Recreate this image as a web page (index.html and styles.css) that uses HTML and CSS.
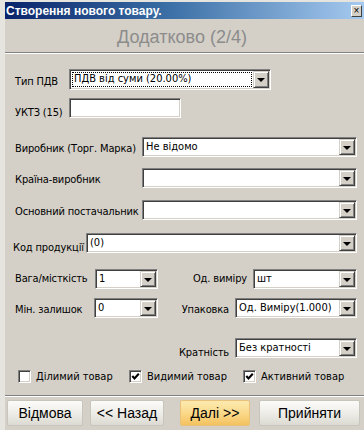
FILE: index.html
```html
<!DOCTYPE html>
<html>
<head>
<meta charset="utf-8">
<link rel="stylesheet" href="styles.css">
</head>
<body>
<div class="window">
  <div class="titlebar">
    <span class="title">Створення нового товару.</span>
    <span class="close">×</span>
  </div>
  <div class="header">Додатково (2/4)</div>
  <div class="form">
    <div class="row r1">
      <span class="lbl w54">Тип ПДВ</span>
      <div class="combo w202 tall"><span class="val focus">ПДВ від суми (20.00%)</span><span class="drop"><i class="tri"></i></span></div>
    </div>
    <div class="row r2">
      <span class="lbl w54 low">УКТЗ (15)</span>
      <div class="field w112"></div>
    </div>
    <div class="row r3">
      <span class="lbl w127">Виробник (Торг. Марка)</span>
      <div class="combo grow"><span class="val">Не відомо</span><span class="drop"><i class="tri"></i></span></div>
    </div>
    <div class="row r4">
      <span class="lbl w127">Країна-виробник</span>
      <div class="combo grow"><span class="val"></span><span class="drop"><i class="tri"></i></span></div>
    </div>
    <div class="row r5">
      <span class="lbl w127">Основний постачальник</span>
      <div class="combo grow"><span class="val"></span><span class="drop"><i class="tri"></i></span></div>
    </div>
    <div class="row r6">
      <span class="lbl w73 low shift">Код продукції</span>
      <div class="combo grow"><span class="val">(0)</span><span class="drop"><i class="tri"></i></span></div>
    </div>
    <div class="row r7">
      <span class="lbl w80 flat">Вага/місткість</span>
      <div class="combo w63"><span class="val">1</span><span class="drop"><i class="tri"></i></span></div>
      <span class="lbl rlbl w95 flat">Од. виміру</span>
      <div class="combo grow"><span class="val">шт</span><span class="drop"><i class="tri"></i></span></div>
    </div>
    <div class="row r8">
      <span class="lbl w79">Мін. залишок</span>
      <div class="combo w64"><span class="val">0</span><span class="drop"><i class="tri"></i></span></div>
      <span class="lbl rlbl w77">Упаковка</span>
      <div class="combo grow"><span class="val">Од. Виміру(1.000)</span><span class="drop"><i class="tri"></i></span></div>
    </div>
    <div class="row r9">
      <span class="lbl rlbl push low">Кратність</span>
      <div class="combo w122"><span class="val">Без кратності</span><span class="drop"><i class="tri"></i></span></div>
    </div>
    <div class="row checks">
      <label class="chk c1"><span class="box"></span>Ділимий товар</label>
      <label class="chk c2"><span class="box"><svg viewBox="0 0 9 9" width="9" height="9"><polyline points="1.3,4 3.5,6.4 7.8,1.8" fill="none" stroke="#000" stroke-width="2.1"/></svg></span>Видимий товар</label>
      <label class="chk c3"><span class="box"><svg viewBox="0 0 9 9" width="9" height="9"><polyline points="1.3,4 3.5,6.4 7.8,1.8" fill="none" stroke="#000" stroke-width="2.1"/></svg></span>Активний товар</label>
    </div>
  </div>
  <div class="sep"></div>
  <div class="buttons">
    <button class="btn b1">Відмова</button>
    <button class="btn b2">&lt;&lt; Назад</button>
    <button class="btn b3 hot">Далі &gt;&gt;</button>
    <button class="btn b4">Прийняти</button>
  </div>
</div>
</body>
</html>
```

FILE: styles.css
```css
html, body {
  margin: 0;
  padding: 0;
  background: #d4d0c8;
}
body {
  font-family: "DejaVu Sans Condensed", "DejaVu Sans", sans-serif;
  font-stretch: semi-condensed;
  font-size: 11px;
  color: #000;
}
.window {
  width: 364px;
  height: 430px;
  box-sizing: border-box;
  border-left: 5px solid #e6e4de;
  border-top: 2px solid #e6e4de;
  background: #d4d0c8;
  overflow: hidden;
}
.titlebar {
  height: 17px;
  display: flex;
  align-items: center;
  justify-content: space-between;
  background: linear-gradient(to right, #0a246a 0%, #3a6ea5 45%, #a6caf0 100%);
}
.title {
  color: #fff;
  font-family: "Liberation Sans", Arial, sans-serif;
  font-weight: bold;
  font-size: 12px;
  padding-left: 1px;
}
.close {
  width: 9px;
  height: 10px;
  margin-right: 2px;
  background: #d4d0c8;
  border: 1px solid;
  border-color: #fff #404040 #404040 #fff;
  font-family: "Liberation Sans", Arial, sans-serif;
  font-size: 10px;
  line-height: 9px;
  text-align: center;
  color: #000;
}
.header {
  height: 33px;
  line-height: 36px;
  text-align: center;
  font-family: "Liberation Sans", Arial, sans-serif;
  font-size: 18px;
  color: #8c8c8c;
  border-bottom: 1px solid #808080;
  box-shadow: 0 1px 0 #fff;
  padding-right: 5px;
}
.form {
  padding: 0 7px 0 10px;
  height: 342px;
  box-sizing: border-box;
  padding-top: 1px;
}
.row {
  display: flex;
  align-items: center;
}
.r1 { margin-top: 15px; }
.r2 { margin-top: 6px; }
.r3 { margin-top: 17px; }
.r4 { margin-top: 11px; }
.r5 { margin-top: 12px; }
.r6 { margin-top: 11px; }
.r7 { margin-top: 14px; }
.r8 { margin-top: 9px; }
.r9 { margin-top: 18px; }
.checks { margin-top: 10px; height: 13px; }

.lbl {
  flex: none;
  line-height: 14px;
  padding-top: 4px;
  white-space: nowrap;
  letter-spacing: -0.15px;
}
.lbl.low { padding-top: 10px; }
.lbl.flat { padding-top: 0; }
.lbl.shift { margin-left: -2px; }
.rlbl {
  text-align: right;
  padding-right: 6px;
  box-sizing: border-box;
}
.push { margin-left: auto; }
.w54 { width: 54px; }
.w73 { width: 73px; }
.w77 { width: 77px; }
.w79 { width: 79px; }
.w80 { width: 80px; }
.w95 { width: 95px; }
.w127 { width: 127px; }
.w63 { width: 63px; }
.w64 { width: 64px; }
.w112 { width: 112px; }
.w122 { width: 122px; }
.w202 { width: 202px; }
.grow { flex: 1; }

.combo, .field {
  flex: none;
  height: 20px;
  box-sizing: border-box;
  background: #fff;
  border: 1px solid;
  border-color: #808080 #fff #fff #808080;
  box-shadow: inset 1px 1px 0 #404040, inset -1px -1px 0 #d4d0c8;
  display: flex;
  align-items: stretch;
  padding: 1px;
}
.combo.grow { flex: 1; }
.combo.tall { height: 21px; }
.val {
  flex: 1;
  padding-left: 2px;
  line-height: 16px;
  white-space: nowrap;
  overflow: hidden;
}
.val.focus {
  outline: 1px dotted #000;
  outline-offset: -2px;
  padding-left: 3px;
}
.drop {
  flex: none;
  width: 16px;
  box-sizing: border-box;
  background: #d4d0c8;
  border: 1px solid;
  border-color: #d4d0c8 #404040 #404040 #d4d0c8;
  box-shadow: inset 1px 1px 0 #fff, inset -1px -1px 0 #808080;
  display: flex;
  align-items: center;
  justify-content: center;
}
.tri {
  width: 0;
  height: 0;
  border-left: 4px solid transparent;
  border-right: 4px solid transparent;
  border-top: 4px solid #000;
  margin-top: 1px;
}

.chk {
  display: flex;
  align-items: center;
  gap: 5px;
  white-space: nowrap;
}
.c1 { margin-left: 3px; width: 111px; }
.c2 { width: 114px; }
.box {
  width: 13px;
  height: 13px;
  box-sizing: border-box;
  background: #fff;
  border: 1px solid;
  border-color: #808080 #fff #fff #808080;
  box-shadow: inset 1px 1px 0 #404040, inset -1px -1px 0 #d4d0c8;
  display: flex;
  align-items: center;
  justify-content: center;
}
.box svg { display: block; }

.sep {
  height: 0;
  border-top: 1px solid #808080;
  border-bottom: 1px solid #fff;
}
.buttons {
  display: flex;
  padding-left: 2px;
  margin-top: 3px;
}
.btn {
  height: 26px;
  font-family: "Liberation Sans", Arial, sans-serif;
  font-size: 14px;
  color: #000;
  border: 1px solid #c8c6bc;
  border-radius: 2px;
  background: linear-gradient(to bottom, #fbfbf9 0%, #eeede8 50%, #dcdad2 100%);
  padding: 0;
}
.b1 { width: 76px; }
.b2 { width: 74px; margin-left: 7px; }
.b3 { width: 70px; margin-left: 16px; }
.b4 { width: 101px; margin-left: 9px; }
.hot {
  border-color: #e8c27a;
  background: linear-gradient(to bottom, #fdeab0 0%, #fad98a 50%, #f4c260 100%);
}
```
